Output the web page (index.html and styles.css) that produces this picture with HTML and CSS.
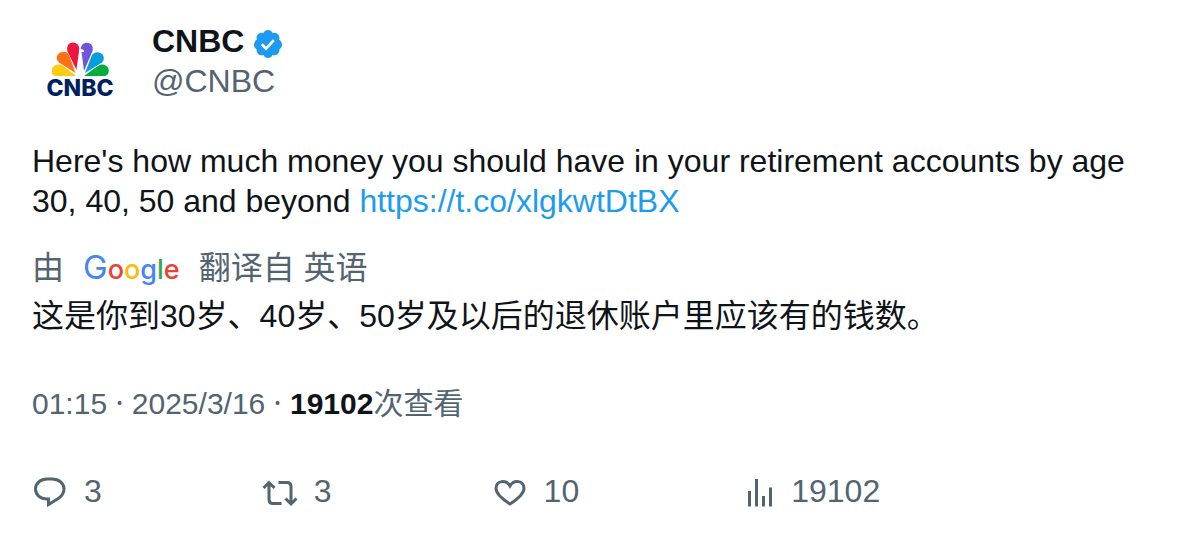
FILE: index.html
```html
<!DOCTYPE html>
<html lang="zh-CN">
<head>
<meta charset="utf-8">
<meta name="viewport" content="width=device-width, initial-scale=1">
<title>CNBC</title>
<link rel="stylesheet" href="styles.css">
</head>
<body>
<article class="post">
  <header class="author">
    <svg class="avatar" viewBox="0 0 96 96" role="img" aria-label="CNBC">
      <path fill="#fccc12" d="M44 55H24.500C18 55 18 44 26 43.500C29 43 32 45 44 55Z"/>
      <path fill="#ff7112" d="M43.500 52L27 41.500C21 36 28 28 35 31.500C37 33 38 36 43.500 52Z"/>
      <path fill="#ef1541" d="M44.500 49L35.500 30.500C33 20 45 19 47 26C47.500 28 47 31 44.500 49Z"/>
      <path fill="#6e55dc" d="M52 50L49.500 31H52V29.500Q51 28 48.800 28C49 19 63 20 60.500 30Z"/>
      <path fill="#059de0" d="M53 52L60 34C66 27 76 35 70 41.500Z"/>
      <path fill="#05ac3f" d="M52 55C65 45 68 43 71 43.500C79 45 78 55 72 55Z"/>
      <text class="avatar-word" x="48" y="75" text-anchor="middle">CNBC</text>
    </svg>
    <div class="names">
      <div class="name">CNBC
        <svg class="verified" viewBox="0 0 24 24" role="img" aria-label="Verified"><path fill="#1d9bf0" d="M22.500 12.500c0-1.580-.875-2.950-2.148-3.600.154-.435.238-.905.238-1.400 0-2.210-1.710-3.998-3.818-3.998-.47 0-.92.084-1.336.25C14.818 2.415 13.510 1.500 12 1.500s-2.816.917-3.437 2.250c-.415-.165-.866-.25-1.336-.25-2.110 0-3.818 1.790-3.818 4 0 .494.083.964.237 1.400-1.272.65-2.147 2.018-2.147 3.600 0 1.495.782 2.798 1.942 3.486-.02.17-.032.34-.032.514 0 2.210 1.708 4 3.818 4 .47 0 .92-.086 1.335-.25.62 1.334 1.926 2.250 3.437 2.250 1.512 0 2.818-.916 3.437-2.250.415.163.865.248 1.336.248 2.110 0 3.818-1.790 3.818-4 0-.174-.012-.344-.033-.513 1.158-.687 1.943-1.990 1.943-3.484z"/><path fill="none" stroke="#fff" stroke-width="2" d="M7.300 12.200l3.200 3.200 5.900-6.300"/></svg>
      </div>
      <div class="handle">@CNBC</div>
    </div>
  </header>

  <p class="body">Here's how much money you should have in your retirement accounts by age 30, 40, 50 and beyond <a href="https://t.co/xlgkwtDtBX">https://t.co/xlgkwtDtBX</a></p>

  <div class="source">
    <span>由</span>
    <span class="google"><span class="initial blue">G</span><span class="red">o</span><span class="yellow">o</span><span class="blue">g</span><span class="green">l</span><span class="red">e</span></span>
    <span>翻译自 英语</span>
  </div>
  <p class="translation">这是你到30岁、40岁、50岁及以后的退休账户里应该有的钱数。</p>

  <div class="meta">01:15 <span class="dot">·</span> 2025/3/16 <span class="dot">·</span> <strong>19102</strong>次查看</div>

  <footer class="actions">
    <button class="action" type="button" aria-label="3 replies">
      <svg class="icon" viewBox="0 0 36 36"><path d="M15.500 26C8 26 3.500 21.500 3.500 16S8.500 6 15 6H20C27 6 32 10.500 32 16C32 20.500 29.500 23.500 25.500 26L16.500 31.500V26Z"/></svg>
      <span>3</span>
    </button>
    <button class="action" type="button" aria-label="3 reposts">
      <svg class="icon" viewBox="0 0 36 36"><path d="M1.500 15L7 9.500L12.500 15M7 10.500V26.500Q7 30.500 11 30.500H19.500M16.500 9.500H25Q29 9.500 29 13.500V30M23.500 25.500L29 31L34.500 25.500"/></svg>
      <span>3</span>
    </button>
    <button class="action" type="button" aria-label="10 likes">
      <svg class="icon" viewBox="0 0 36 36"><path d="M18 31C8 24.500 4 20 4 15.500C4 7.500 14 6 18 13C22 6 32 7.500 32 15.500C32 20 28 24.500 18 31Z"/></svg>
      <span>10</span>
    </button>
    <button class="action" type="button" aria-label="19102 views">
      <svg class="icon" viewBox="0 0 36 36"><path d="M10.500 18V33.500M17.500 6V33.500M24.500 23V33.500M31.500 14.500V33.500"/></svg>
      <span>19102</span>
    </button>
  </footer>
</article>
</body>
</html>
```
FILE: styles.css
```css
* {
  box-sizing: border-box;
}

body {
  margin: 0;
  background: #fff;
  color: #0f1419;
  font-family: "Liberation Sans", "Noto Sans CJK SC", sans-serif;
  font-size: 32px;
  line-height: 40px;
}

.post {
  padding: 21px 32px;
}

.author {
  display: flex;
  gap: 24px;
  margin-bottom: 24px;
}

.avatar {
  width: 96px;
  height: 96px;
  flex: none;
}

.avatar-word {
  fill: #002060;
  font-family: Inter, sans-serif;
  font-size: 23px;
  font-weight: 800;
}

.name {
  display: flex;
  align-items: center;
  gap: 8px;
  font-weight: 700;
}

.verified {
  width: 32px;
  height: 32px;
  margin-top: 6px;
}

.handle,
.source,
.meta {
  color: #536471;
}

.body,
.translation {
  margin: 0;
}

.body a {
  color: #1d9bf0;
  text-decoration: none;
}

.source {
  display: flex;
  align-items: center;
  gap: 19px;
  height: 40px;
  margin: 27px 0 8px;
}

.google {
  font-family: Inter, sans-serif;
  font-size: 27px;
  font-weight: 500;
}

.initial {
  font-size: 33px;
  font-weight: 400;
}

.blue {
  color: #4285f4;
}

.red {
  color: #ea4335;
}

.yellow {
  color: #fbbc05;
}

.green {
  color: #34a853;
}

.meta {
  margin-top: 48px;
  font-size: 30px;
}

.dot {
  font-family: "Noto Sans", sans-serif;
  line-height: 1;
}

.meta strong {
  color: #0f1419;
}

.actions {
  display: flex;
  gap: 160px;
  margin-top: 47px;
}

.action {
  display: flex;
  align-items: center;
  gap: 16px;
  padding: 0;
  border: 0;
  background: none;
  color: #536471;
  font: inherit;
  cursor: pointer;
}

.icon {
  width: 36px;
  height: 36px;
  fill: none;
  stroke: currentColor;
  stroke-width: 3;
}
```
